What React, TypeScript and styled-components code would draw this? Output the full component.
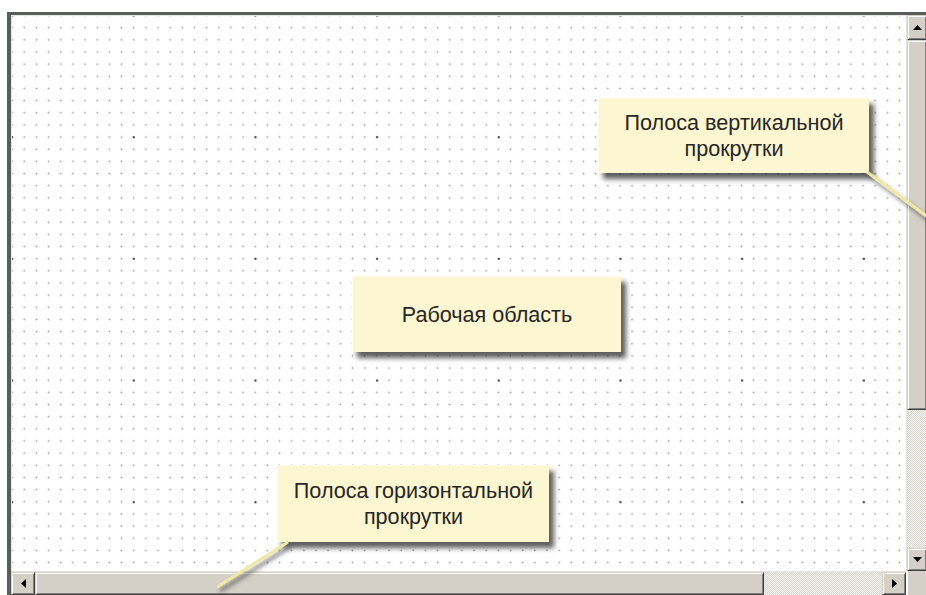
import React from "react";
import styled, { createGlobalStyle } from "styled-components";

const Global = createGlobalStyle`
  html, body {
    margin: 0;
    padding: 0;
    background: #ffffff;
    overflow: hidden;
  }
  #root {
    width: 926px;
    height: 595px;
    overflow: hidden;
  }
`;

const FACE = "#d4d0c8";

const Page = styled.div`
  padding: 12px 0 0 7px;
  width: 926px;
  height: 595px;
  box-sizing: border-box;
  overflow: hidden;
`;

const Window = styled.div`
  position: relative;
  width: 925px;
  height: 590px;
  box-sizing: border-box;
  border-style: solid;
  border-color: #5a5e5a;
  border-width: 3px 0 0 4px;
  box-shadow: inset 1px 1px 0 #9a9c9a;
  display: grid;
  grid-template-columns: 895px 21px;
  grid-template-rows: 556px 24px;
  background: ${FACE};
`;

/* dotted design surface: fine dots every ~12px and darker marks every 10th */
const Canvas = styled.div`
  position: relative;
  background-color: #ffffff;
  background-image:
    radial-gradient(circle, #4a4a4a 0 0.7px, transparent 1.1px),
    radial-gradient(circle, #a8a8a8 0 0.7px, transparent 1.2px);
  background-size: 121.7px 121.7px, 12.17px 12.17px;
  background-position: 60.95px 60.35px, 6.2px 5.6px;
  border-left: 1px solid #e8e8e8;
  border-top: 1px solid #e8e8e8;
  box-sizing: border-box;
`;

const VBar = styled.div`
  display: flex;
  flex-direction: column;
  background: ${FACE};
  border-left: 1px solid #e4e2dc;
`;

const HBar = styled.div`
  display: flex;
  flex-direction: row;
  background: ${FACE};
  border-top: 1px solid #e4e2dc;
`;

const Corner = styled.div`
  background: ${FACE};
  border-left: 2px solid #ffffff;
`;

const ArrowButton = styled.div<{ $size: number }>`
  flex: 0 0 ${(p) => p.$size}px;
  box-sizing: border-box;
  display: flex;
  align-items: center;
  justify-content: center;
  background: ${FACE};
  border: 1px solid;
  border-color: ${FACE} #404040 #404040 ${FACE};
  box-shadow: inset 1px 1px 0 #ffffff, inset -1px -1px 0 #808080;
`;

const Thumb = styled.div<{ $size: number }>`
  flex: 0 0 ${(p) => p.$size}px;
  box-sizing: border-box;
  background: ${FACE};
  border: 1px solid;
  border-color: ${FACE} #404040 #404040 ${FACE};
  box-shadow: inset 1px 1px 0 #ffffff, inset -1px -1px 0 #808080;
`;

const Track = styled.div`
  flex: 1 1 auto;
  background-color: #ffffff;
  background-image: repeating-conic-gradient(${FACE} 0 25%, #ffffff 0 50%);
  background-size: 2px 2px;
`;

const Note = styled.div<{ $x: number; $y: number; $w: number; $h: number }>`
  position: absolute;
  left: ${(p) => p.$x}px;
  top: ${(p) => p.$y}px;
  width: ${(p) => p.$w}px;
  height: ${(p) => p.$h}px;
  box-sizing: border-box;
  display: flex;
  align-items: center;
  justify-content: center;
  text-align: center;
  background: #fcf7d1;
  border-top: 1px solid #fffbe6;
  border-left: 1px solid #fffbe6;
  box-shadow: 5px 6px 5px rgba(40, 40, 40, 0.75);
  font-family: "Liberation Sans", Arial, sans-serif;
  font-size: 21.6px;
  line-height: 26px;
  color: #262626;
  z-index: 2;
`;

const Leaders = styled.svg`
  position: absolute;
  left: -4px;
  top: -3px;
  width: 925px;
  height: 590px;
  pointer-events: none;
  z-index: 3;
  overflow: visible;
`;

const UpArrow = () => (
  <svg width="9" height="5" viewBox="0 0 9 5">
    <polygon points="0,5 9,5 4.5,0" fill="#000" />
  </svg>
);
const DownArrow = () => (
  <svg width="9" height="5" viewBox="0 0 9 5">
    <polygon points="0,0 9,0 4.5,5" fill="#000" />
  </svg>
);
const LeftArrow = () => (
  <svg width="5" height="9" viewBox="0 0 5 9">
    <polygon points="5,0 5,9 0,4.5" fill="#000" />
  </svg>
);
const RightArrow = () => (
  <svg width="5" height="9" viewBox="0 0 5 9">
    <polygon points="0,0 0,9 5,4.5" fill="#000" />
  </svg>
);

export default function App() {
  return (
    <>
      <Global />
      <Page>
        <Window>
          <Canvas />
          <VBar>
            <ArrowButton $size={25}>
              <UpArrow />
            </ArrowButton>
            <Thumb $size={370} />
            <Track />
            <ArrowButton $size={23}>
              <DownArrow />
            </ArrowButton>
          </VBar>
          <HBar>
            <ArrowButton $size={24}>
              <LeftArrow />
            </ArrowButton>
            <Thumb $size={729} />
            <Track />
            <ArrowButton $size={24}>
              <RightArrow />
            </ArrowButton>
          </HBar>
          <Corner />

          <Note $x={587} $y={83} $w={271} $h={75}>
            Полоса вертикальной
            <br />
            прокрутки
          </Note>
          <Note $x={341} $y={261} $w={269} $h={76}>
            Рабочая область
          </Note>
          <Note $x={266} $y={450} $w={272} $h={77}>
            Полоса горизонтальной
            <br />
            прокрутки
          </Note>

          <Leaders viewBox="0 0 925 590">
            <defs>
              <filter id="leaderShadow" x="-20%" y="-20%" width="140%" height="140%">
                <feDropShadow dx="3" dy="4" stdDeviation="2" floodColor="#303030" floodOpacity="0.7" />
              </filter>
            </defs>
            <line x1="860" y1="160" x2="922" y2="206" stroke="#efeaa2" strokeWidth="3" filter="url(#leaderShadow)" />
            <line x1="281" y1="530" x2="210" y2="575" stroke="#efeaa2" strokeWidth="3" filter="url(#leaderShadow)" />
          </Leaders>
        </Window>
      </Page>
    </>
  );
}
